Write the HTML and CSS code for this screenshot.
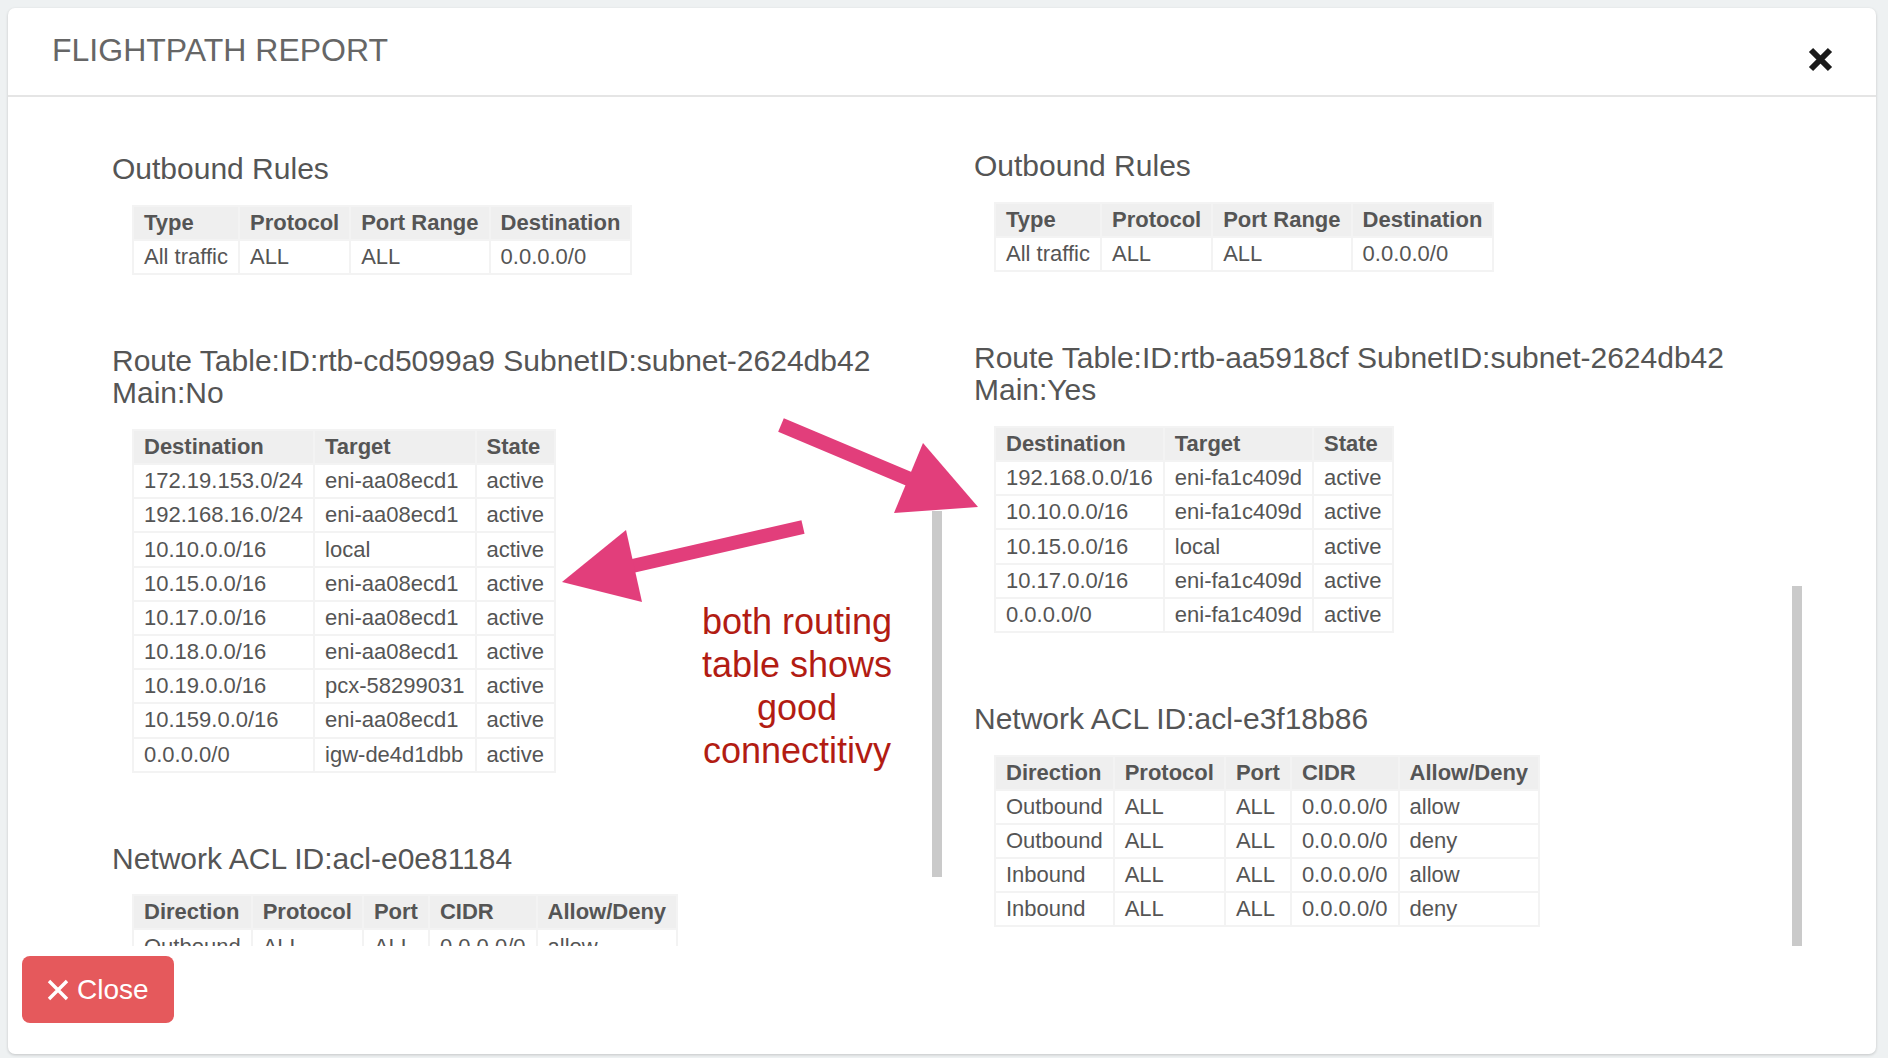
FILE: index.html
```html
<!DOCTYPE html>
<html>
<head>
<meta charset="utf-8">
<title>Flightpath Report</title>
<link rel="stylesheet" href="styles.css">
</head>
<body>
<div class="modal">
  <div class="modal-header">
    <h4 class="modal-title">FLIGHTPATH REPORT</h4>
    <svg class="x-icon" width="25" height="25" viewBox="0 0 25 25"><path d="M3 3 L22 22 M22 3 L3 22" stroke="#1b1b1b" stroke-width="6" fill="none"/></svg>
  </div>
  <div class="modal-body">
    <div class="col col-left">
      <h3>Outbound Rules</h3>
      <table>
        <tr><th>Type</th><th>Protocol</th><th>Port Range</th><th>Destination</th></tr>
        <tr><td>All traffic</td><td>ALL</td><td>ALL</td><td>0.0.0.0/0</td></tr>
      </table>
      <h3>Route Table:ID:rtb-cd5099a9 SubnetID:subnet-2624db42<br>Main:No</h3>
      <table>
        <tr><th>Destination</th><th>Target</th><th>State</th></tr>
        <tr><td>172.19.153.0/24</td><td>eni-aa08ecd1</td><td>active</td></tr>
        <tr><td>192.168.16.0/24</td><td>eni-aa08ecd1</td><td>active</td></tr>
        <tr><td>10.10.0.0/16</td><td>local</td><td>active</td></tr>
        <tr><td>10.15.0.0/16</td><td>eni-aa08ecd1</td><td>active</td></tr>
        <tr><td>10.17.0.0/16</td><td>eni-aa08ecd1</td><td>active</td></tr>
        <tr><td>10.18.0.0/16</td><td>eni-aa08ecd1</td><td>active</td></tr>
        <tr><td>10.19.0.0/16</td><td>pcx-58299031</td><td>active</td></tr>
        <tr><td>10.159.0.0/16</td><td>eni-aa08ecd1</td><td>active</td></tr>
        <tr><td>0.0.0.0/0</td><td>igw-de4d1dbb</td><td>active</td></tr>
      </table>
      <h3>Network ACL ID:acl-e0e81184</h3>
      <table>
        <tr><th>Direction</th><th>Protocol</th><th>Port</th><th>CIDR</th><th>Allow/Deny</th></tr>
        <tr><td>Outbound</td><td>ALL</td><td>ALL</td><td>0.0.0.0/0</td><td>allow</td></tr>
        <tr><td>Outbound</td><td>ALL</td><td>ALL</td><td>0.0.0.0/0</td><td>deny</td></tr>
        <tr><td>Inbound</td><td>ALL</td><td>ALL</td><td>0.0.0.0/0</td><td>allow</td></tr>
        <tr><td>Inbound</td><td>ALL</td><td>ALL</td><td>0.0.0.0/0</td><td>deny</td></tr>
      </table>
    </div>
    <div class="col col-right">
      <h3>Outbound Rules</h3>
      <table>
        <tr><th>Type</th><th>Protocol</th><th>Port Range</th><th>Destination</th></tr>
        <tr><td>All traffic</td><td>ALL</td><td>ALL</td><td>0.0.0.0/0</td></tr>
      </table>
      <h3>Route Table:ID:rtb-aa5918cf SubnetID:subnet-2624db42<br>Main:Yes</h3>
      <table>
        <tr><th>Destination</th><th>Target</th><th>State</th></tr>
        <tr><td>192.168.0.0/16</td><td>eni-fa1c409d</td><td>active</td></tr>
        <tr><td>10.10.0.0/16</td><td>eni-fa1c409d</td><td>active</td></tr>
        <tr><td>10.15.0.0/16</td><td>local</td><td>active</td></tr>
        <tr><td>10.17.0.0/16</td><td>eni-fa1c409d</td><td>active</td></tr>
        <tr><td>0.0.0.0/0</td><td>eni-fa1c409d</td><td>active</td></tr>
      </table>
      <h3>Network ACL ID:acl-e3f18b86</h3>
      <table>
        <tr><th>Direction</th><th>Protocol</th><th>Port</th><th>CIDR</th><th>Allow/Deny</th></tr>
        <tr><td>Outbound</td><td>ALL</td><td>ALL</td><td>0.0.0.0/0</td><td>allow</td></tr>
        <tr><td>Outbound</td><td>ALL</td><td>ALL</td><td>0.0.0.0/0</td><td>deny</td></tr>
        <tr><td>Inbound</td><td>ALL</td><td>ALL</td><td>0.0.0.0/0</td><td>allow</td></tr>
        <tr><td>Inbound</td><td>ALL</td><td>ALL</td><td>0.0.0.0/0</td><td>deny</td></tr>
      </table>
    </div>
    <div class="thumb thumb-left"></div>
    <div class="thumb thumb-right"></div>
  </div>
  <div class="modal-footer">
    <button class="btn-close"><svg width="22" height="22" viewBox="0 0 22 22"><path d="M2 2 L20 20 M20 2 L2 20" stroke="#fff" stroke-width="3.4" fill="none"/></svg><span>Close</span></button>
  </div>
</div>
<svg class="annot" width="1888" height="1058" viewBox="0 0 1888 1058">
  <line x1="781" y1="425" x2="914" y2="481" stroke="#e23e7b" stroke-width="14.5"/>
  <polygon points="923,443 978,507 894,513" fill="#e23e7b"/>
  <line x1="803" y1="527" x2="628" y2="567" stroke="#e23e7b" stroke-width="14"/>
  <polygon points="626,530 562,582 642,602" fill="#e23e7b"/>
</svg>
<div class="note">both routing<br>table shows<br>good<br>connectitivy</div>
</body>
</html>
```

FILE: styles.css
```css
html, body {
  margin: 0;
  padding: 0;
}
body {
  background: #eef1f2;
  font-family: "Liberation Sans", Arial, sans-serif;
  color: #555;
  width: 1888px;
  height: 1058px;
  overflow: hidden;
  position: relative;
}
.modal {
  margin: 8px 0 0 8px;
  width: 1868px;
  height: 1046px;
  background: #fff;
  border-radius: 7px;
  box-shadow: 0 1px 3px rgba(0, 0, 0, 0.18);
  display: flex;
  flex-direction: column;
  overflow: hidden;
}
.modal-header {
  box-sizing: border-box;
  height: 89px;
  flex: none;
  border-bottom: 2px solid #e5e5e5;
  padding: 25px 43px 0 44px;
  display: flex;
  justify-content: space-between;
  align-items: flex-start;
}
.modal-title {
  margin: 0;
  font-size: 32px;
  line-height: 35px;
  font-weight: normal;
  color: #666;
}
.x-icon {
  margin-top: 14px;
  display: block;
}
.modal-body {
  position: relative;
  height: 849px;
  flex: none;
  padding: 0 73px 0 71px;
  display: grid;
  grid-template-columns: 1fr 1fr;
}
.col {
  height: 849px;
  overflow: hidden;
  padding-left: 33px;
  box-sizing: border-box;
}
.col-left {
  padding-top: 56px;
}
.col-right {
  padding-top: 53px;
}
h3 {
  margin: 0 0 19px 0;
  font-size: 30px;
  line-height: 32.5px;
  font-weight: normal;
  color: #555;
}
table {
  border-collapse: collapse;
  margin: 0 0 70px 20px;
  font-size: 22px;
  line-height: 24px;
  color: #555;
}
th, td {
  border: 2px solid #f3f3f3;
  padding: 4.1px 10px;
  text-align: left;
  white-space: nowrap;
}
th {
  background: #efefef;
  font-weight: bold;
}
.thumb {
  position: absolute;
  width: 10px;
  background: #cacaca;
}
.thumb-left {
  left: 924px;
  top: 414px;
  height: 366px;
}
.thumb-right {
  left: 1784px;
  top: 489px;
  height: 360px;
}
.modal-footer {
  flex: 1;
  padding: 10px 0 0 14px;
}
.btn-close {
  display: inline-flex;
  align-items: center;
  gap: 8px;
  height: 67px;
  width: 152px;
  box-sizing: border-box;
  padding: 0 0 0 25px;
  border: none;
  border-radius: 8px;
  background: #e5595c;
  color: #fff;
  font-family: "Liberation Sans", Arial, sans-serif;
  font-size: 28px;
}
.btn-close svg {
  display: block;
}
.annot {
  position: absolute;
  left: 0;
  top: 0;
  pointer-events: none;
}
.note {
  position: absolute;
  left: 697px;
  top: 600px;
  width: 200px;
  text-align: center;
  font-size: 36px;
  line-height: 43px;
  color: #b21c13;
}
```
